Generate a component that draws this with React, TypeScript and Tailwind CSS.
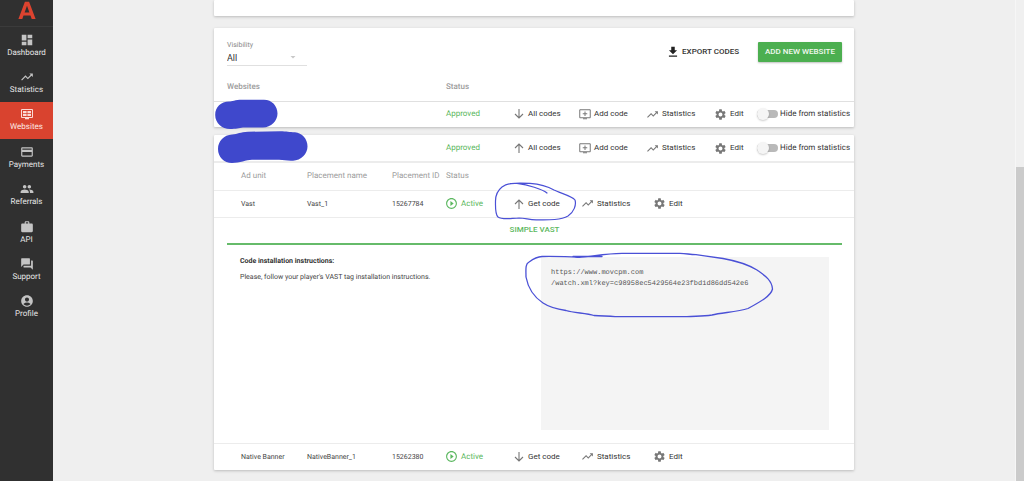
import { useState } from "react";
import type { ReactNode } from "react";
import type { IconType } from "react-icons";
import {
  MdAccountCircle,
  MdArrowDropDown,
  MdDashboard,
  MdFileDownload,
  MdPayment,
  MdPeople,
  MdPlayCircleOutline,
  MdQuestionAnswer,
  MdSettings,
  MdTrendingUp,
  MdWork,
} from "react-icons/md";

function ScreenIcon({ className }: { className?: string }) {
  return (
    <svg viewBox="-2 -2 28 28" className={className} fill="currentColor" aria-hidden="true">
      <path
        fillRule="evenodd"
        d="M2 2h20a2 2 0 0 1 2 2v14a2 2 0 0 1-2 2h-6v2.500H8V20H2a2 2 0 0 1-2-2V4a2 2 0 0 1 2-2zm0 2.200v13.600h20V4.200z"
      />
      <path d="M4 6h7.200v4.300H4zM12.800 6H20v4.300h-7.200zM4 11.800h7.200v4H4zM12.800 11.800H20v4h-7.200z" />
    </svg>
  );
}

function AddScreenIcon({ className }: { className?: string }) {
  return (
    <svg viewBox="0 0 24 24" className={className} fill="none" stroke="currentColor" strokeWidth="2" aria-hidden="true">
      <path d="M1.500 3.500h21v16h-21zM8 21.500h8M12 7v9M7.500 11.500h9" />
    </svg>
  );
}

function ArrowIcon({ up, className }: { up: boolean; className?: string }) {
  return (
    <svg viewBox="0 0 24 24" className={className} fill="none" stroke="currentColor" strokeWidth="2.200" aria-hidden="true">
      <path d={up ? "M12 22V4M4 12l8-8 8 8" : "M12 2v18M4 12l8 8 8-8"} />
    </svg>
  );
}

const nav: { label: string; Icon: IconType | typeof ScreenIcon }[] = [
  { label: "Dashboard", Icon: MdDashboard },
  { label: "Statistics", Icon: MdTrendingUp },
  { label: "Websites", Icon: ScreenIcon },
  { label: "Payments", Icon: MdPayment },
  { label: "Referrals", Icon: MdPeople },
  { label: "API", Icon: MdWork },
  { label: "Support", Icon: MdQuestionAnswer },
  { label: "Profile", Icon: MdAccountCircle },
];

function Sidebar() {
  return (
    <aside className="w-[53px] shrink-0 bg-[#303030]">
      <div className="flex h-[27px] justify-center border-b border-[#3b3b3b]">
        <svg viewBox="0 0 18 18" className="mt-px size-[18px]" fill="#dc432f" aria-label="Logo" role="img">
          <path fillRule="evenodd" d="M6.900.8h4.200L17.600 18h-3.900l-1.200-3.400H5.500L4.300 18H.4zM9 4.800 6.600 11.500h4.800z" />
        </svg>
      </div>
      <nav className="grid h-[299px] auto-rows-fr">
        {nav.map(({ label, Icon }) => {
          const active = label === "Websites";
          return (
            <a
              key={label}
              href={"#" + label.toLowerCase()}
              aria-current={active ? "page" : undefined}
              className={
                "flex flex-col items-center justify-center text-[8px] leading-3 " +
                (active ? "bg-[#d9432f] text-[#fde9e6]" : "text-[#e6e6e6]")
              }
            >
              <Icon className={active ? "size-[14px] text-[#fbdad5]" : "size-[14px] text-[#c4c4c4]"} />
              {label}
            </a>
          );
        })}
      </nav>
    </aside>
  );
}

function Action({ icon, children }: { icon: ReactNode; children: ReactNode }) {
  return (
    <button type="button" className="flex items-center gap-[3px] whitespace-nowrap text-[#333]">
      <span className="flex w-[13px] justify-center text-[#777]">{icon}</span>
      {children}
    </button>
  );
}

function HideSwitch() {
  const [on, setOn] = useState(false);
  return (
    <label className="flex items-center gap-[2px] whitespace-nowrap text-[#333]">
      <input type="checkbox" className="peer sr-only" checked={on} onChange={() => setOn(!on)} />
      <span className="flex h-3 w-[21px] items-center">
        <span className={"flex h-2 w-full items-center rounded-full " + (on ? "justify-end bg-[#a5d6a7]" : "bg-[#b9b9b9]")}>
          <span className="size-3 shrink-0 rounded-full bg-[#f5f5f5] shadow-[0_1px_2px_rgba(0,0,0,0.2)]" />
        </span>
      </span>
      Hide from statistics
    </label>
  );
}

function SiteRow({ open }: { open: boolean }) {
  return (
    <tr className="h-[26px]">
      <td />
      <td className="text-[#5cb860]">Approved</td>
      <td>
        <div className="grid grid-cols-[66px_68px_68px_43px_auto] items-center">
          <Action icon={<ArrowIcon up={open} className="size-3" />}>All codes</Action>
          <Action icon={<AddScreenIcon className="size-3" />}>Add code</Action>
          <Action icon={<MdTrendingUp className="size-[13px]" />}>Statistics</Action>
          <Action icon={<MdSettings className="size-[13px]" />}>Edit</Action>
          <HideSwitch />
        </div>
      </td>
    </tr>
  );
}

function SiteColumns() {
  return (
    <colgroup>
      <col className="w-[232px]" />
      <col className="w-[66px]" />
      <col />
    </colgroup>
  );
}

function UnitRow({ unit, name, id, open }: { unit: string; name: string; id: string; open: boolean }) {
  return (
    <tr className="h-[27px] border-t border-[#ececec] text-[#444]">
      <td className="pl-[27px] text-[7px]">{unit}</td>
      <td className="text-[7px]">{name}</td>
      <td className="text-[7px]">{id}</td>
      <td>
        <span className="flex items-center gap-[3px] text-[#5cb860]">
          <MdPlayCircleOutline className="-ml-px size-[13px]" />
          Active
        </span>
      </td>
      <td>
        <div className="grid grid-cols-[69px_72px_auto] items-center">
          <Action icon={<ArrowIcon up={open} className="size-3" />}>Get code</Action>
          <Action icon={<MdTrendingUp className="size-[13px]" />}>Statistics</Action>
          <Action icon={<MdSettings className="size-[13px]" />}>Edit</Action>
        </div>
      </td>
    </tr>
  );
}

const card = "rounded-[1px] bg-white shadow-[0_1px_3px_rgba(0,0,0,0.22)]";

function Annotations() {
  return (
    <svg
      viewBox="214 0 640 481"
      className="pointer-events-none absolute left-0 top-0 h-[481px] w-[640px]"
      fill="none"
      stroke="#4a50d6"
      strokeLinecap="round"
      strokeLinejoin="round"
      aria-hidden="true"
    >
      <g fill="#3f48cc" stroke="none">
        <path d="M229 101.500C232 101.500 235 99.700 242 99.700H264C272 99.700 277.500 106 277.500 113.500S271 127.500 263 127.500H243C239 128 236 129 230 129C222 129 215.200 123 215.200 115S221 101.500 229 101.500z" />
        <path d="M232 134.500C238 134 240 132 248 131.700L280 131.300C287 131.300 289 132.300 295 132.300C302 133 307.500 139 307.500 146.500C307.500 154 301 160.500 293 160.700C287 161 284 160 279 159.800H252C246 160 240 163 232 163C224 163 218 157 218 149S224 135 232 134.500z" />
      </g>
      <path
        strokeWidth="1.2"
        d="M547 193C542 189 528 185 517 183.400C510 183 506 184 502 187C497 191 495.500 196 495.500 201C495.500 208 495 214 498 217C502 220 509 218.500 519 218C526 218 529 220 537 219.800C550 220 561 220 568 216C574 212 576.500 205 575 200C572 196 560 193 554 190C547 186 538 184 530 183.400C523 183 516 183 510 183.500"
      />
      <path
        strokeWidth="1.3"
        d="M602 256.500H573C575 258.500 580 257 588 256.500C600 255 608 253.500 622 253.300H680C687 253.500 689 254.500 696 254.700C705 256 712 257 723 258.500C737 261 748 264.500 757 270C764 275 772 280 772.500 289C771 296 760 302 748 308.500C737 312 722 312.500 712 315C702 316.500 695 316 687 316.700H615C608 315.500 602 316.500 594 315.500C586 313 574 313 566 310.500C556 309 549 307 543 303C534 297 528 288 526 277C526 270 525 264 529 262C533 259 536 256.700 542 256.500C555 256 567 257 576 257"
      />
    </svg>
  );
}

export default function App() {
  return (
    <div className="flex min-h-screen bg-[#efefef] font-['Roboto',sans-serif] text-[8px] leading-3 [text-rendering:geometricPrecision]">
      <Sidebar />
      <main className="min-w-0 flex-1">
        <div className="relative mx-auto max-w-[640px]">
          <div className={"h-4 " + card} />

          <section className={"mt-3 " + card}>
            <div className="flex h-[47px] items-start justify-between pl-[13px] pr-3 pt-[11px]">
              <label className="block w-20 border-b border-[#e0e0e0] text-[7px] leading-3 text-[#888]">
                Visibility
                <span className="relative block">
                  <select className="block h-[14px] w-full appearance-none bg-transparent text-[9px] leading-3 text-[#333]">
                    <option>All</option>
                  </select>
                  <MdArrowDropDown className="pointer-events-none absolute right-2 top-0 size-3 text-[#c8c8c8]" />
                </span>
              </label>
              <div className="flex items-center gap-[19px] pt-[3px] font-medium">
                <button type="button" className="flex items-center gap-[2px] text-[#333]">
                  <MdFileDownload className="size-[14px] text-[#222]" />
                  EXPORT CODES
                </button>
                <button
                  type="button"
                  className="h-5 rounded-[1px] bg-[#4caf50] px-[7px] text-[#f1f9f1] shadow-[0_1px_2px_rgba(0,0,0,0.25)]"
                >
                  ADD NEW WEBSITE
                </button>
              </div>
            </div>
            <table className="w-full table-fixed border-collapse">
              <SiteColumns />
              <thead>
                <tr className="h-[26px] border-b border-[#e0e0e0] text-left align-top text-[#9c9c9c]">
                  <th scope="col" className="pl-[13px] pt-[6px] font-medium">Websites</th>
                  <th scope="col" className="pt-[6px] font-medium">Status</th>
                  <td />
                </tr>
              </thead>
              <tbody>
                <SiteRow open={false} />
              </tbody>
            </table>
          </section>

          <section className={"mt-2 " + card}>
            <table className="w-full table-fixed border-collapse">
              <SiteColumns />
              <tbody>
                <SiteRow open />
              </tbody>
            </table>
            <table className="w-full table-fixed border-collapse border-t-2 border-[#ececec]">
              <colgroup>
                <col className="w-[93px]" />
                <col className="w-[85px]" />
                <col className="w-[54px]" />
                <col className="w-[66px]" />
                <col />
              </colgroup>
              <thead>
                <tr className="h-[28px] whitespace-nowrap text-left text-[#9c9c9c]">
                  <th scope="col" className="pl-[27px] font-normal">Ad unit</th>
                  <th scope="col" className="font-normal">Placement name</th>
                  <th scope="col" className="font-normal">Placement ID</th>
                  <th scope="col" className="font-normal">Status</th>
                  <td />
                </tr>
              </thead>
              <tbody>
                <UnitRow unit="Vast" name="Vast_1" id="15267784" open />
                <tr className="border-t border-[#ececec]">
                  <td colSpan={5} className="pb-[13px] pl-[13px] pr-3">
                    <div className="flex h-[27px] items-center justify-center border-b-2 border-[#66bb6a]">
                      <button type="button" className="font-medium text-[#5cb860]">SIMPLE VAST</button>
                    </div>
                    <div className="flex justify-between px-[13px] pt-[10px]">
                      <div className="text-[7px] text-[#444]">
                        <h2 className="pb-1 font-bold text-[#333]">Code installation instructions:</h2>
                        <p>Please, follow your player's VAST tag installation instructions.</p>
                      </div>
                      <pre className="mt-[2px] h-[173px] w-[288px] bg-[#f4f4f4] px-[10px] py-[11px] font-['Liberation_Mono',monospace] text-[7px] leading-[11px] text-[#555]">
                        {"https://www.movcpm.com\n/watch.xml?key=c98958ec5429564e23fbd1d86dd542e6"}
                      </pre>
                    </div>
                  </td>
                </tr>
                <UnitRow unit="Native Banner" name="NativeBanner_1" id="15262380" open={false} />
              </tbody>
            </table>
          </section>
          <Annotations />
        </div>
      </main>
      <div className="flex w-[9px] shrink-0 flex-col border-l border-[#f6f6f6] bg-[#f0f0f0] pt-[167px]">
        <div className="flex-1 bg-[#cbcbcb]" />
      </div>
    </div>
  );
}
